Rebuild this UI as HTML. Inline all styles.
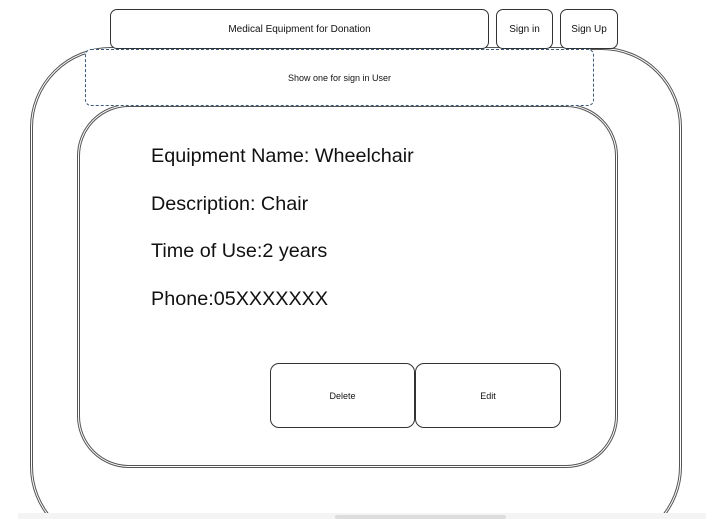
<!DOCTYPE html>
<html><head><style>
html,body{margin:0;width:715px;height:519px;overflow:hidden}
body{background:#fff;font-family:"Liberation Sans",Arial,sans-serif;color:#111}
#w{position:relative;width:715px;height:519px;overflow:hidden}
.a{position:absolute;box-sizing:border-box}
.dbl{border:3px double #555}
.b{border:1px solid #333;display:flex;align-items:center;justify-content:center;font-size:10px}
.t{position:absolute;left:151px;font-size:19.8px;line-height:22px;color:#111}
</style></head><body><div id="w">
<svg class="a" style="left:0;top:0" width="715" height="519" viewBox="0 0 715 519">
<rect x="30.5" y="47.5" width="651" height="499" rx="80" fill="none" stroke="#555" stroke-width="1"/>
<rect x="32.5" y="49.5" width="647" height="495" rx="78" fill="none" stroke="#555" stroke-width="1"/>
</svg>
<div class="a dbl" style="left:77px;top:104px;width:541px;height:364px;border-radius:52px"></div>
<div class="a b" style="left:110px;top:9px;width:379px;height:40px;border-radius:7px;background:#fff">Medical Equipment for Donation</div>
<div class="a b" style="left:496px;top:9px;width:57px;height:40px;border-radius:7px;background:#fff">Sign in</div>
<div class="a b" style="left:560px;top:9px;width:58px;height:40px;border-radius:7px;background:#fff">Sign Up</div>
<div class="a b" style="left:85px;top:49px;width:509px;height:57px;border-radius:6px;border:1px dashed #3a5a7a;background:#fff;font-size:9px">Show one for sign in User</div>
<div class="t" style="top:145px">Equipment Name: Wheelchair</div>
<div class="t" style="top:193px">Description: Chair</div>
<div class="t" style="top:240px">Time of Use:2 years</div>
<div class="t" style="top:288px">Phone:05XXXXXXX</div>
<div class="a b" style="left:270px;top:363px;width:145px;height:65px;border-radius:9px;background:#fff;font-size:9px">Delete</div>
<div class="a b" style="left:415px;top:363px;width:146px;height:65px;border-radius:9px;background:#fff;font-size:9px">Edit</div>
<div class="a" style="left:18px;top:513px;width:688px;height:6px;background:#f4f4f4"></div>
<div class="a" style="left:335px;top:515px;width:171px;height:4px;background:#ddd;border-radius:2px"></div>
</div></body></html>
